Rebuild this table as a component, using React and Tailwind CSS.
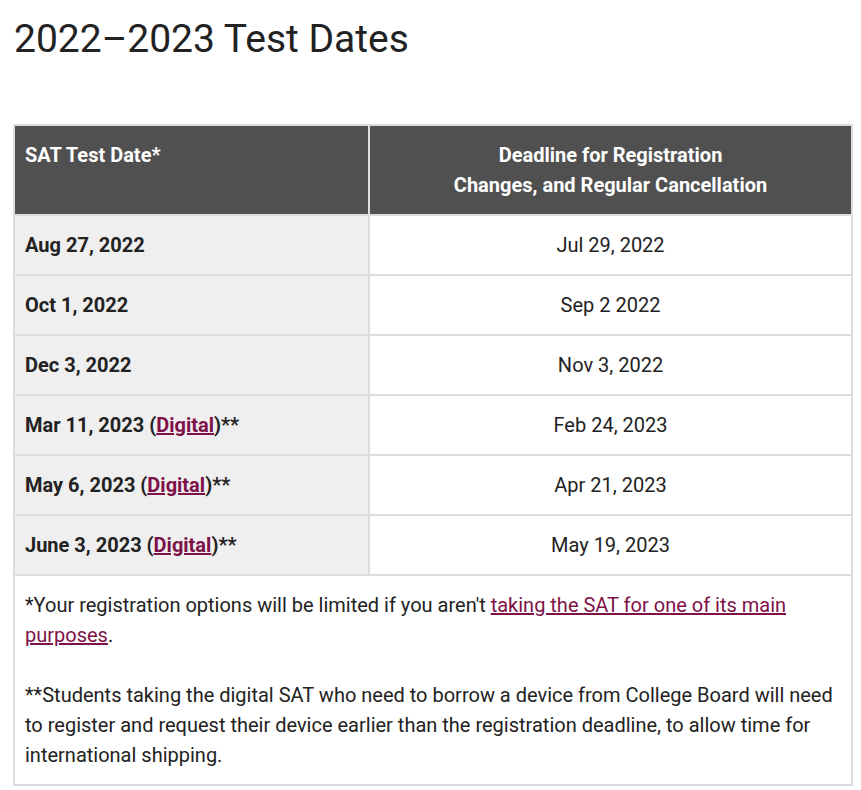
const rows = [
  { date: "Aug 27, 2022", deadline: "Jul 29, 2022" },
  { date: "Oct 1, 2022", deadline: "Sep 2 2022" },
  { date: "Dec 3, 2022", deadline: "Nov 3, 2022" },
  { date: "Mar 11, 2023", digital: true, deadline: "Feb 24, 2023" },
  { date: "May 6, 2023", digital: true, deadline: "Apr 21, 2023" },
  { date: "June 3, 2023", digital: true, deadline: "May 19, 2023" },
];

export default function App() {
  return (
    <div className="bg-white min-h-[790px] px-[13px] pt-[14px] font-['Roboto',sans-serif] text-[#222]">
      <h1 className="text-[39px] leading-[50px] font-normal text-[#222] pl-px">
        2022–2023 Test Dates
      </h1>
      <table className="mt-[60px] w-[840px] table-fixed border-collapse text-[20px] leading-[30px]">
        <colgroup>
          <col className="w-[355px]" />
          <col />
        </colgroup>
        <thead>
          <tr>
            <th className="border-2 border-[#dcdcdc] bg-[#505050] text-white font-bold text-left align-top px-[10px] py-[14px]">
              SAT Test Date*
            </th>
            <th className="border-2 border-[#dcdcdc] bg-[#505050] text-white font-bold text-center align-top px-[10px] py-[14px]">
              Deadline for Registration
              <br />
              Changes, and Regular Cancellation
            </th>
          </tr>
        </thead>
        <tbody>
          {rows.map((r) => (
            <tr key={r.date}>
              <td className="border-2 border-[#dcdcdc] bg-[#efefef] font-bold px-[10px] py-[14px]">
                {r.date}
                {r.digital && (
                  <>
                    {" ("}
                    <a href="#" className="text-[#7d1148] underline">
                      Digital
                    </a>
                    {")**"}
                  </>
                )}
              </td>
              <td className="border-2 border-[#dcdcdc] bg-white text-center px-[10px] py-[14px]">
                {r.deadline}
              </td>
            </tr>
          ))}
          <tr>
            <td colSpan={2} className="border-2 border-[#dcdcdc] bg-white px-[10px] py-[14px]">
              <p>
                *Your registration options will be limited if you aren't{" "}
                <a href="#" className="text-[#7d1148] underline">
                  taking the SAT for one of its main purposes
                </a>
                .
              </p>
              <p className="mt-[30px]">
                **Students taking the digital SAT who need to borrow a device from College Board will need to
                register and request their device earlier than the registration deadline, to allow time for
                international shipping.
              </p>
            </td>
          </tr>
        </tbody>
      </table>
    </div>
  );
}
